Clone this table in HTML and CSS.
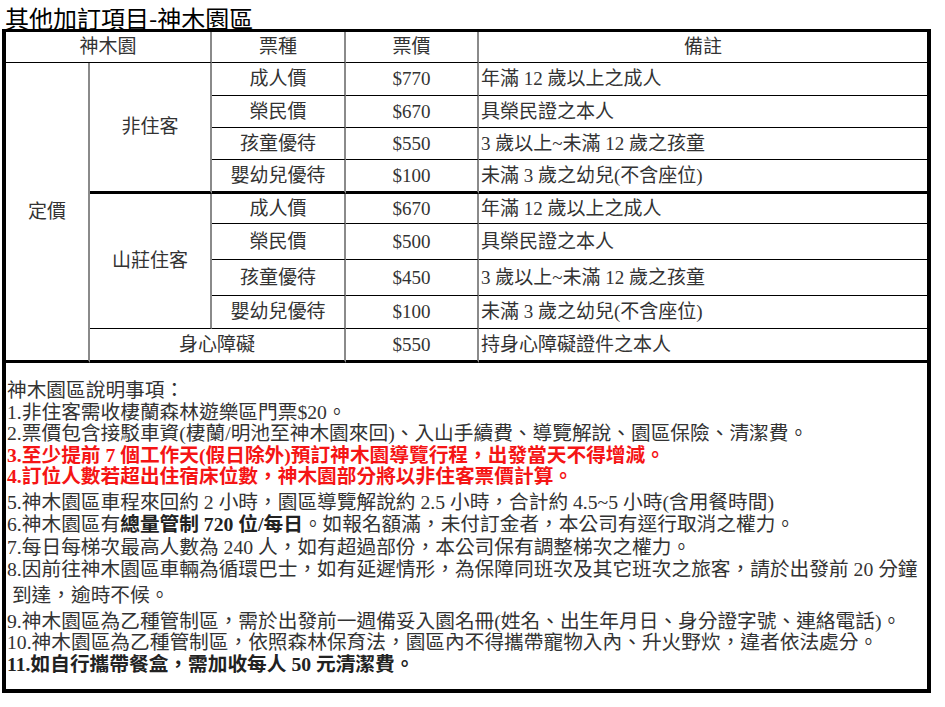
FILE: index.html
```html
<!DOCTYPE html>
<html lang="zh-Hant">
<head>
<meta charset="utf-8">
<title>其他加訂項目-神木園區</title>
<link rel="stylesheet" href="styles.css">
</head>
<body>
<h1 class="title">其他加訂項目-神木園區</h1>
<table class="price">
  <colgroup>
    <col class="c1"><col class="c2"><col class="c3"><col class="c4"><col class="c5">
  </colgroup>
  <thead>
    <tr class="h31">
      <th colspan="2">神木園</th><th>票種</th><th>票價</th><th class="last">備註</th>
    </tr>
  </thead>
  <tbody>
    <tr class="h33">
      <td rowspan="9" class="thick">定價</td>
      <td rowspan="4" class="thick">非住客</td>
      <td>成人價</td><td>$770</td><td class="note last">年滿 12 歲以上之成人</td>
    </tr>
    <tr class="h32"><td>榮民價</td><td>$670</td><td class="note last">具榮民證之本人</td></tr>
    <tr class="h32"><td>孩童優待</td><td>$550</td><td class="note last">3 歲以上~未滿 12 歲之孩童</td></tr>
    <tr class="h34"><td class="thick">嬰幼兒優待</td><td class="thick">$100</td><td class="note last thick">未滿 3 歲之幼兒(不含座位)</td></tr>
    <tr class="h30">
      <td rowspan="4">山莊住客</td>
      <td>成人價</td><td>$670</td><td class="note last">年滿 12 歲以上之成人</td>
    </tr>
    <tr class="h36"><td>榮民價</td><td>$500</td><td class="note last">具榮民證之本人</td></tr>
    <tr class="h36"><td>孩童優待</td><td>$450</td><td class="note last">3 歲以上~未滿 12 歲之孩童</td></tr>
    <tr class="h33"><td>嬰幼兒優待</td><td>$100</td><td class="note last">未滿 3 歲之幼兒(不含座位)</td></tr>
    <tr class="h34"><td colspan="2" class="thick">身心障礙</td><td class="thick">$550</td><td class="note last thick">持身心障礙證件之本人</td></tr>
    <tr>
      <td colspan="5" class="notes last">
        <div class="line">神木園區說明事項：</div>
        <div class="line">1.非住客需收棲蘭森林遊樂區門票$20。</div>
        <div class="line">2.票價包含接駁車資(棲蘭/明池至神木園來回)、入山手續費、導覽解說、園區保險、清潔費。</div>
        <div class="line alert">3.至少提前 7 個工作天(假日除外)預訂神木園導覽行程，出發當天不得增減。</div>
        <div class="line alert">4.訂位人數若超出住宿床位數，神木園部分將以非住客票價計算。</div>
        <div class="line gap">5.神木園區車程來回約 2 小時，園區導覽解說約 2.5 小時，合計約 4.5~5 小時(含用餐時間)</div>
        <div class="line">6.神木園區有<strong>總量管制 720 位/每日</strong>。如報名額滿，未付訂金者，本公司有逕行取消之權力。</div>
        <div class="line gap-s">7.每日每梯次最高人數為 240 人，如有超過部份，本公司保有調整梯次之權力。</div>
        <div class="line">8.因前往神木園區車輛為循環巴士，如有延遲情形，為保障同班次及其它班次之旅客，請於出發前 20 分鐘</div>
        <div class="line gap">&nbsp;到達，逾時不候。</div>
        <div class="line gap">9.神木園區為乙種管制區，需於出發前一週備妥入園名冊(姓名、出生年月日、身分證字號、連絡電話)。</div>
        <div class="line">10.神木園區為乙種管制區，依照森林保育法，園區內不得攜帶寵物入內、升火野炊，違者依法處分。</div>
        <div class="line strong">11.如自行攜帶餐盒，需加收每人 50 元清潔費。</div>
      </td>
    </tr>
  </tbody>
</table>
</body>
</html>
```

FILE: styles.css
```css
* { box-sizing: border-box; }
html, body { margin: 0; background: #fff; }
body {
  padding: 6px 14px 0 2px;
  font-family: "Liberation Serif", "Noto Sans CJK TC", serif;
  color: #333;
}
.title {
  margin: 0 0 0 3px;
  font: normal 24px/23px "Noto Sans CJK TC", sans-serif;
  color: #000;
}
.price {
  border-collapse: separate;
  border-spacing: 0;
  table-layout: fixed;
  width: 929px;
  border: 4px solid #000;
  border-top-width: 3px;
  font-size: 19px;
}
.price col.c1 { width: 84px; }
.price col.c2 { width: 122px; }
.price col.c3 { width: 134px; }
.price col.c4 { width: 133px; }
.price col.c5 { width: 448px; }
.price th, .price td {
  padding: 0 2px;
  border-right: 2px solid #8a8a8a;
  border-bottom: 1px solid #000;
  text-align: center;
  vertical-align: middle;
  font-weight: normal;
  white-space: nowrap;
  overflow: hidden;
  line-height: 22px;
}
.price .last { border-right: 0; }
.price .thick { border-bottom: 3px solid #000; }
.price .note { text-align: left; padding-left: 2px; }
.h30 { height: 30px; }
.h31 { height: 31px; }
.h32 { height: 32px; }
.h33 { height: 33px; }
.h34 { height: 34px; }
.h36 { height: 36px; }
.price td.notes {
  height: 326px;
  padding: 17px 1px 0 1px;
  text-align: left;
  vertical-align: top;
  border-bottom: 0;
  font-size: 19.7px;
}
.notes .line { line-height: 21.5px; white-space: nowrap; }
.notes .gap { margin-top: 4.5px; }
.notes .gap-s { margin-top: 2px; }
.notes .alert { color: #f51515; font-weight: bold; }
.notes strong, .notes .strong { font-weight: bold; color: #222; }
```
